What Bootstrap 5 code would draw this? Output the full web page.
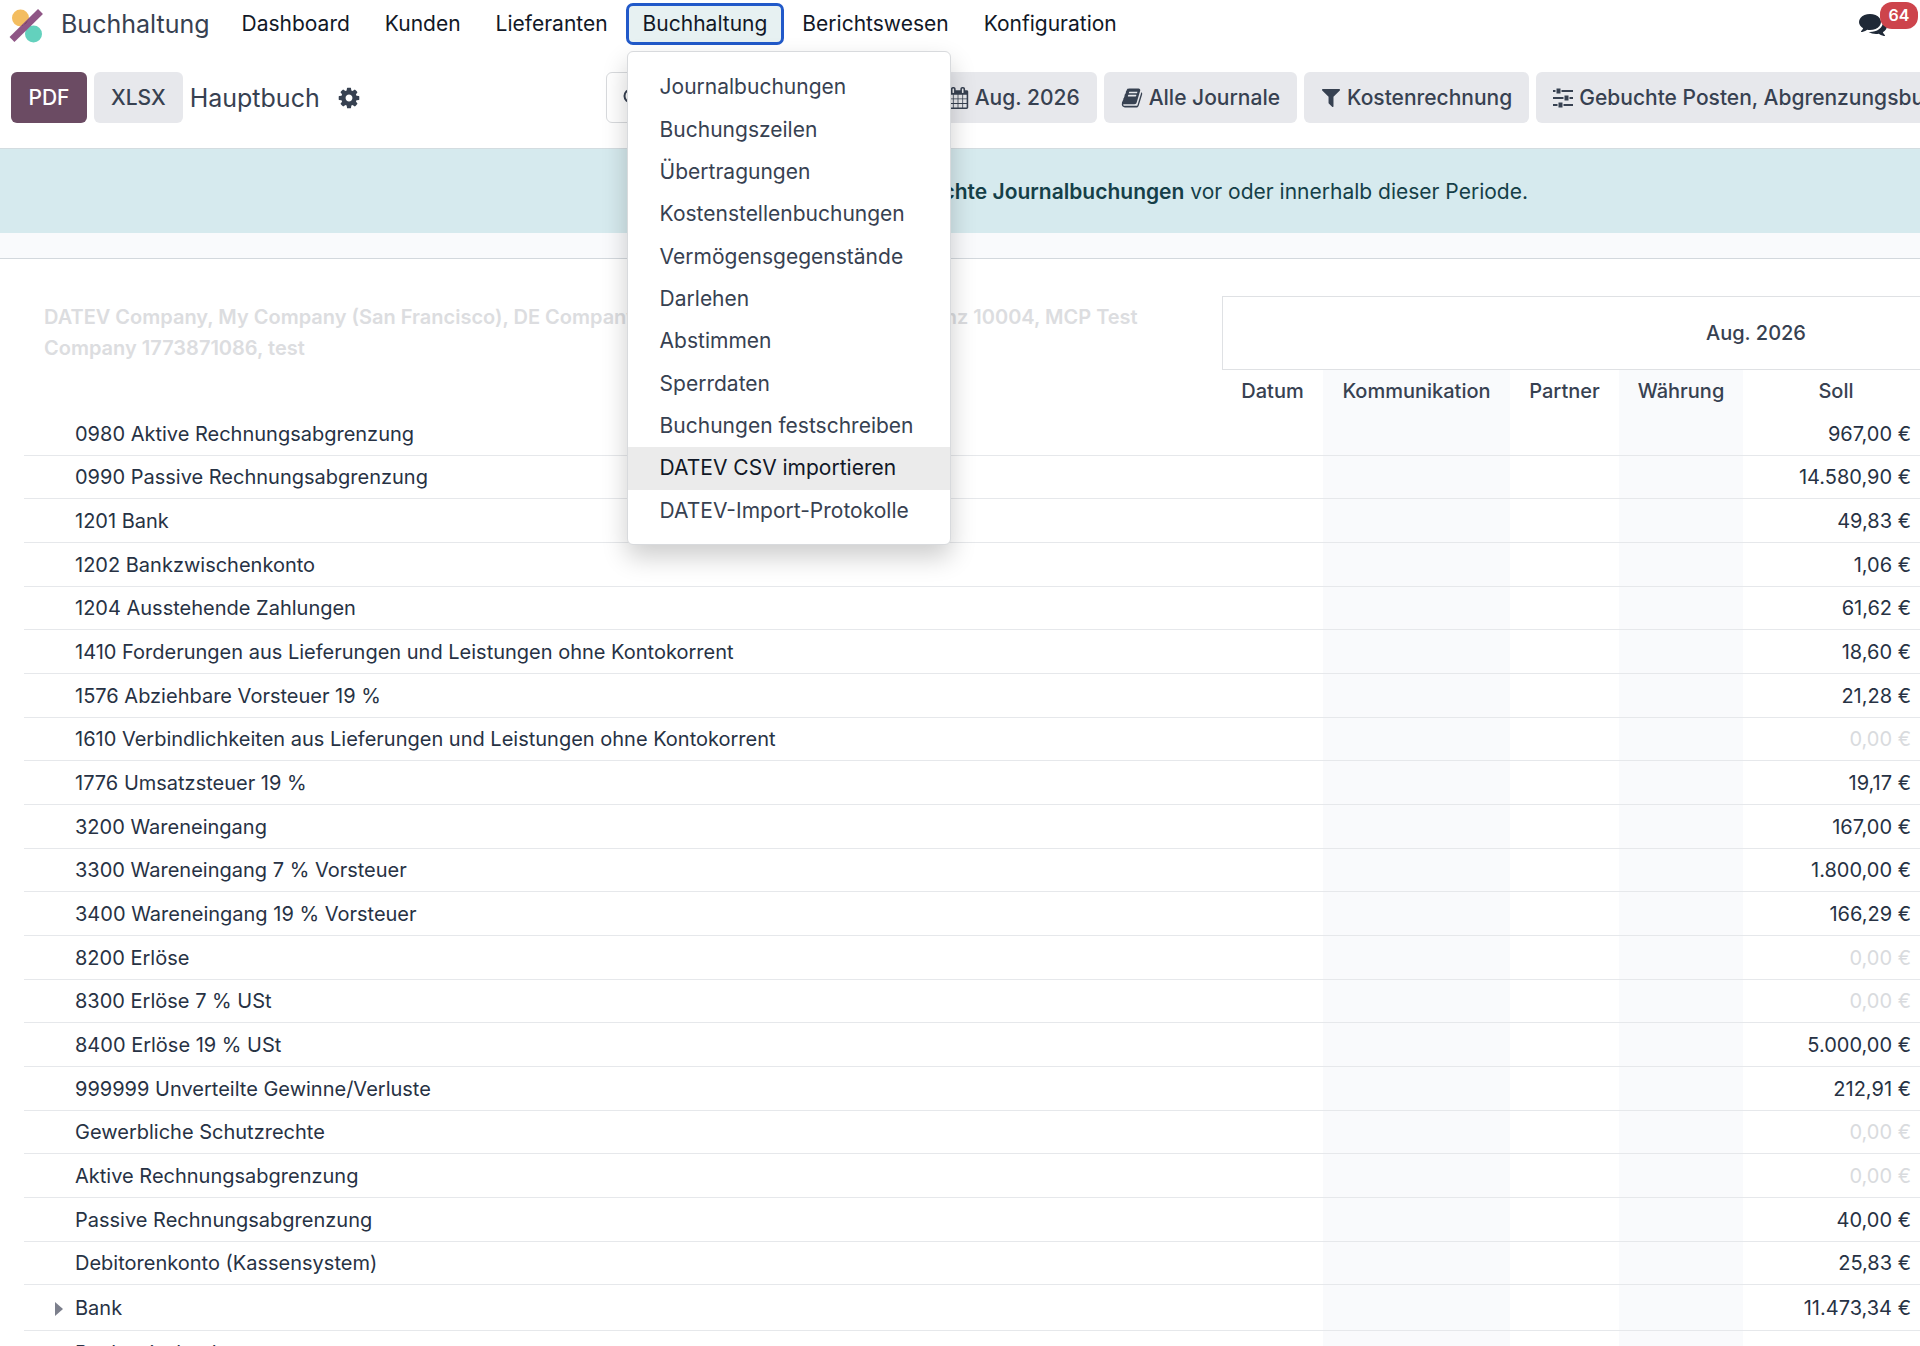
<!DOCTYPE html>
<html lang="de">
<head>
<meta charset="utf-8">
<meta name="viewport" content="width=device-width, initial-scale=1">
<title>Hauptbuch – Buchhaltung</title>
<link href="https://cdn.jsdelivr.net/npm/bootstrap@5.3.0/dist/css/bootstrap.min.css" rel="stylesheet">
<style>
  body { font-family: Inter, "Liberation Sans", sans-serif; font-size: 21px; line-height: 32px; color: #374151; overflow-x: hidden; }
  .viewport-clip { overflow: hidden; height: 100vh; }
  svg { fill: currentColor; flex: none; }

  .topbar { height: 48px; padding-left: 9px; padding-right: 2px; }
  .app-title { font-size: 25px; margin-left: 17px; margin-right: 15px; color: #374151; text-decoration: none; }
  .menu-link { border: 3px solid transparent; border-radius: 7px; padding: 2px 14px; margin: 0 1px 0 0; height: 42px; background: none; color: #111827; white-space: nowrap; text-decoration: none; }
  .menu-link.show { background: #e7f1f2; border-color: #2159c9; color: #111827; }
  .menu-panel { top: 100%; left: 1px; margin-top: 6px; width: 324px; height: 494px; padding: 14px 0 12px; border: 1px solid #d8dadd; border-radius: 6px; background: #fff; box-shadow: 0 12px 26px rgba(0,0,0,.2); display: grid; grid-auto-rows: 1fr; z-index: 20; }
  .menu-panel a { padding: 0 32px; color: #374151; white-space: nowrap; text-decoration: none; display: flex; align-items: center; }
  .menu-panel a.current { background: #ebebeb; color: #111827; }
  .chat { width: 59px; height: 48px; border: 0; background: none; color: #1f2937; padding: 0; }
  .chat-count { top: 2px; right: 0; width: 38px; height: 27px; border-radius: 12px; background: #cd444c; color: #fff; font-size: 16px; line-height: 27px; font-weight: 600; }

  .toolbar { padding: 24px 0 25px 11px; border-bottom: 1px solid #d3dce0; }
  .tool-group { gap: 7px; }
  .tool { height: 51px; padding: 1px 17px 0; border: 0; border-radius: 6px; background: #e7e8ec; color: #374151; font-weight: 500; white-space: nowrap; display: inline-flex; align-items: center; gap: 6px; }
  .tool-primary { background: #6b4b63; color: #fff; min-width: 76px; justify-content: center; }
  .page-name { font-size: 25px; margin-right: 10px; }
  .search-box { width: 317px; height: 51px; border: 1px solid #d8dadd; border-radius: 6px; padding: 0 16px; }
  .search-box svg { fill: none; }
  .search-box input { border: 0; outline: 0; width: 240px; background: none; }
  .filters { margin-left: 245px; }

  .wide { width: 2320px; }
  .notice { height: 84px; padding-top: 2px; background: #d6eaee; color: #153f48; }
  .notice b { font-weight: 600; }
  .spacer-band { height: 26px; background: #f9fafc; border-bottom: 1px solid #d3d8dd; }

  .report { padding: 37px 30px 0 24px; font-size: 20px; line-height: 30px; }
  .ledger { table-layout: fixed; width: 100%; border-collapse: separate; border-spacing: 0; color: #273244; }
  .ledger th, .ledger td { padding: 0; }
  .ledger thead th { font-weight: 500; text-align: center; color: #374151; }
  .ledger thead .companies { text-align: left; vertical-align: top; padding: 6px 60px 0 20px; font-weight: 600; color: #dcdde0; line-height: 31px; }
  .ledger .period { height: 74px; border: 1px solid #dfe1e4; }
  .ledger .captions th { height: 42px; }
  .ledger tbody td { height: 44px; border-bottom: 1px solid #e6e8eb; }
  .ledger tbody tr:nth-child(3n+2) td { height: 43px; }
  .ledger tbody tr.foldable td { height: 46px; }
  .ledger .account { padding-left: 51px; }
  .ledger .foldable .account { padding-left: 31px; }
  .foldable svg { margin-right: 12px; color: #7c7f8c; }
  .ledger .tint { background: #f9fafc; }
  .ledger .amount { text-align: right; padding-right: 18px; }
  .ledger .zero { color: #d9dbde; }
</style>
<script src="https://cdn.jsdelivr.net/npm/bootstrap@5.3.0/dist/js/bootstrap.bundle.min.js"></script>
</head>
<body>
<div class="viewport-clip">
  <nav class="topbar d-flex align-items-center" aria-label="Hauptmenü">
    <svg width="35" height="42" viewBox="0 0 35 42"><circle cx="11.500" cy="15" r="8.500" fill="#f3bd60"/><circle cx="24.500" cy="31" r="8.500" fill="#63d1bd"/><path d="M3 36.500 31.500 8.500" stroke="#8f5686" stroke-width="7"/><path d="M13 22.500q5-1.500 6.500-6.500l.5 0-6.500 7z" fill="#7a3c4f"/></svg>
    <a href="#" class="app-title">Buchhaltung</a>
    <a href="#" class="menu-link">Dashboard</a>
    <button class="menu-link">Kunden</button>
    <button class="menu-link">Lieferanten</button>
    <div class="position-relative d-flex">
      <button class="menu-link show" aria-expanded="true">Buchhaltung</button>
      <div class="menu-panel position-absolute">
        <a href="#">Journalbuchungen</a>
        <a href="#">Buchungszeilen</a>
        <a href="#">Übertragungen</a>
        <a href="#">Kostenstellenbuchungen</a>
        <a href="#">Vermögensgegenstände</a>
        <a href="#">Darlehen</a>
        <a href="#">Abstimmen</a>
        <a href="#">Sperrdaten</a>
        <a href="#">Buchungen festschreiben</a>
        <a href="#" class="current">DATEV CSV importieren</a>
        <a href="#">DATEV-Import-Protokolle</a>
      </div>
    </div>
    <button class="menu-link">Berichtswesen</button>
    <button class="menu-link">Konfiguration</button>
    <button class="chat ms-auto position-relative d-flex align-items-center" aria-label="Nachrichten">
      <svg width="28" height="28" viewBox="0 0 1792 1792"><path d="M1408 768q0 139-94 257t-256.500 186.500-353.500 68.500q-86 0-176-16-124 88-278 128-36 9-86 16h-3q-11 0-20.500-8t-11.500-21q-1-3-1-6.500t.5-6.500 2-6l2.500-5 3.500-5.500 4-5 4.500-5 4-4.500q5-6 23-25t26-29.500 22.500-29 25-38.500 20.500-44q-124-72-195-177t-71-224q0-139 94-257t256.500-186.500 353.500-68.500 353.500 68.500 256.500 186.500 94 257zm384 256q0 120-71 224.500t-195 176.500q10 24 20.500 44t25 38.500 22.500 29 26 29.500 23 25q1 1 4 4.500t4.500 5 4 5 3.500 5.500l2.500 5 2 6 .5 6.500-1 6.500q-3 14-13 22t-22 7q-50-7-86-16-154-40-278-128-90 16-176 16-271 0-472-132 58 4 88 4 161 0 309-45t264-129q125-92 192-212t67-254q0-77-23-152 129 71 204 178t75 230z"/></svg>
      <span class="chat-count position-absolute text-center">64</span>
    </button>
  </nav>

  <div class="toolbar wide d-flex align-items-center">
    <div class="tool-group d-flex align-items-center flex-shrink-0">
      <button class="tool tool-primary">PDF</button>
      <button class="tool">XLSX</button>
      <span class="page-name">Hauptbuch</span>
      <svg width="24" height="24" viewBox="0 0 1792 1792"><path d="M1152 896q0-106-75-181t-181-75-181 75-75 181 75 181 181 75 181-75 75-181zm512-109v222q0 12-8 23t-20 13l-185 28q-19 54-39 91 35 50 107 138 10 12 10 25t-9 23q-27 37-99 108t-94 71q-12 0-26-9l-138-108q-44 23-91 38-16 136-29 186-7 28-36 28h-222q-14 0-24.500-8.500t-11.500-21.500l-28-184q-49-16-90-37l-141 107q-10 9-25 9-14 0-25-11-126-114-165-168-7-10-7-23 0-12 8-23 15-21 51-66.500t54-70.500q-27-50-41-99l-183-27q-13-2-21-12.500t-8-23.500v-222q0-12 8-23t19-13l186-28q14-46 39-92-40-57-107-138-10-12-10-24 0-10 9-23 26-36 98.500-107.500t94.500-71.500q13 0 26 10l138 107q44-23 91-38 16-136 29-186 7-28 36-28h222q14 0 24.500 8.500t11.500 21.500l28 184q49 16 90 37l142-107q9-9 24-9 13 0 25 10 129 119 165 170 7 8 7 22 0 12-8 23-15 21-51 66.500t-54 70.500q26 50 41 98l183 28q13 2 21 12.500t8 23.500z" fill-rule="evenodd"/></svg>
    </div>
    <div class="filters tool-group d-flex align-items-center">
      <label class="search-box d-flex align-items-center">
        <svg width="20" height="20" viewBox="0 0 20 20" stroke="currentColor" stroke-width="2"><circle cx="8" cy="8" r="6.500"/><path d="m13 13 6 6"/></svg>
        <input type="search" aria-label="Suche">
      </label>
      <button class="tool">
        <svg width="22" height="22" viewBox="0 0 1792 1792"><path d="M192 1664h288v-288h-288v288zm352 0h320v-288h-320v288zm-352-352h288v-320h-288v320zm352 0h320v-320h-320v320zm-352-384h288v-288h-288v288zm736 736h320v-288h-320v288zm-384-736h320v-288h-320v288zm768 736h288v-288h-288v288zm-384-352h320v-320h-320v320zm-352-864v-288q0-13-9.500-22.500t-22.500-9.500h-64q-13 0-22.500 9.500t-9.500 22.500v288q0 13 9.500 22.500t22.500 9.500h64q13 0 22.500-9.500t9.500-22.500zm736 864h288v-320h-288v320zm-384-384h320v-288h-320v288zm384 0h288v-288h-288v288zm32-480v-288q0-13-9.500-22.500t-22.500-9.500h-64q-13 0-22.500 9.500t-9.500 22.500v288q0 13 9.500 22.500t22.500 9.500h64q13 0 22.500-9.500t9.500-22.500zm384-64v1280q0 52-38 90t-90 38h-1408q-52 0-90-38t-38-90v-1280q0-52 38-90t90-38h128v-96q0-66 47-113t113-47h64q66 0 113 47t47 113v96h384v-96q0-66 47-113t113-47h64q66 0 113 47t47 113v96h128q52 0 90 38t38 90z"/></svg>
        Aug. 2026</button>
      <button class="tool">
        <svg width="22" height="22" viewBox="0 0 1792 1792"><path d="M1703 478q40 57 18 129l-275 906q-19 64-76.500 107.500t-122.500 43.500h-923q-77 0-148.500-53.500t-99.500-131.500q-24-67-2-127 0-4 3-27t4-37q1-8-3-21.500t-3-19.500q2-11 8-21t16.500-23.500 16.500-23.500q23-38 45-91.500t30-91.500q3-10 .5-30t-.5-28q3-11 17-28t17-23q21-36 42-92t25-90q1-9-2.500-32t.5-28q4-13 22-30.500t22-22.500q19-26 42.500-84.500t27.500-96.500q1-8-3-25.500t-2-26.500q2-8 9-18t18-23 17-21q8-12 16.500-30.500t15-35 16-36 19.500-32 26.500-23.500 36-11.500 47.500 5.500l-1 3q38-9 51-9h761q74 0 114 56t18 130l-274 906q-36 119-71.500 153.500t-128.500 34.500h-869q-27 0-38 15-11 16-1 43 24 70 144 70h923q29 0 56-15.500t35-41.500l300-987q7-22 5-57 38 15 59 43zm-1064 2q-4 13 2 22.500t20 9.500h608q13 0 25.500-9.500t16.500-22.500l21-64q4-13-2-22.500t-20-9.500h-608q-13 0-25.500 9.500t-16.500 22.500zm-83 256q-4 13 2 22.500t20 9.500h608q13 0 25.500-9.500t16.500-22.500l21-64q4-13-2-22.500t-20-9.500h-608q-13 0-25.500 9.500t-16.500 22.500z"/></svg>
        Alle Journale</button>
      <button class="tool">
        <svg width="20" height="23" viewBox="180 100 1430 1792"><path d="M1595 295q17 41-14 70l-493 493v742q0 42-39 59-13 5-25 5-27 0-45-19l-256-256q-19-19-19-45v-486l-493-493q-31-29-14-70 17-39 59-39h1280q42 0 59 39z"/></svg>
        Kostenrechnung</button>
      <button class="tool">
        <svg width="20" height="20" viewBox="0 0 20 20"><path d="M0 3h20M0 10h20M0 17h20" stroke="currentColor" stroke-width="2"/><path d="M2.500 0h6v6h-6zM10.500 7h6v6h-6zM4.500 14h6v6h-6z" fill="#e7e8ec"/><path d="M3.500 .5h4v5h-4zM11.500 7.500h4v5h-4zM5.500 14.500h4v5h-4z"/></svg>
        Gebuchte Posten, Abgrenzungsbuchungen</button>
    </div>
  </div>

  <div class="notice wide d-flex align-items-center justify-content-center">
    <div>Es gibt <b>ungebuchte Journalbuchungen</b> vor oder innerhalb dieser Periode.</div>
  </div>
  <div class="spacer-band wide"></div>

  <main class="report wide">
    <table class="ledger">
      <colgroup>
        <col style="width:1198px"><col style="width:101px"><col style="width:187px"><col style="width:109px"><col style="width:124px"><col style="width:186px"><col>
      </colgroup>
      <thead>
        <tr>
          <th class="companies" rowspan="2">DATEV Company, My Company (San Francisco), DE Company, CH-Company GmbH, Testinstanz 10004, MCP Test Company 1773871086, test</th>
          <th class="period" colspan="6">Aug. 2026</th>
        </tr>
        <tr class="captions"><th>Datum</th><th class="tint">Kommunikation</th><th>Partner</th><th class="tint">Währung</th><th>Soll</th><th></th></tr>
      </thead>
      <tbody id="ledger-rows"></tbody>
    </table>
  </main>
</div>
<script>
  const entries = [
    ["0980 Aktive Rechnungsabgrenzung", "967,00"],
    ["0990 Passive Rechnungsabgrenzung", "14.580,90"],
    ["1201 Bank", "49,83"],
    ["1202 Bankzwischenkonto", "1,06"],
    ["1204 Ausstehende Zahlungen", "61,62"],
    ["1410 Forderungen aus Lieferungen und Leistungen ohne Kontokorrent", "18,60"],
    ["1576 Abziehbare Vorsteuer 19 %", "21,28"],
    ["1610 Verbindlichkeiten aus Lieferungen und Leistungen ohne Kontokorrent", "0,00"],
    ["1776 Umsatzsteuer 19 %", "19,17"],
    ["3200 Wareneingang", "167,00"],
    ["3300 Wareneingang 7 % Vorsteuer", "1.800,00"],
    ["3400 Wareneingang 19 % Vorsteuer", "166,29"],
    ["8200 Erlöse", "0,00"],
    ["8300 Erlöse 7 % USt", "0,00"],
    ["8400 Erlöse 19 % USt", "5.000,00"],
    ["999999 Unverteilte Gewinne/Verluste", "212,91"],
    ["Gewerbliche Schutzrechte", "0,00"],
    ["Aktive Rechnungsabgrenzung", "0,00"],
    ["Passive Rechnungsabgrenzung", "40,00"],
    ["Debitorenkonto (Kassensystem)", "25,83"],
    ["Bank", "11.473,34", true],
    ["Bankzwischenkonto", ""]
  ];
  const arrow = '<svg width="8" height="14" viewBox="0 0 8 14"><path d="M0 0l8 7-8 7z"/></svg>';
  document.getElementById("ledger-rows").innerHTML = entries.map(([name, sum, fold]) =>
    `<tr class="${fold ? "foldable" : ""}"><td class="account">${fold ? arrow : ""}${name}</td><td></td><td class="tint"></td><td></td><td class="tint"></td>` +
    `<td class="amount ${sum === "0,00" ? "zero" : ""}">${sum ? sum + " €" : ""}</td><td></td></tr>`).join("");
</script>
</body>
</html>
